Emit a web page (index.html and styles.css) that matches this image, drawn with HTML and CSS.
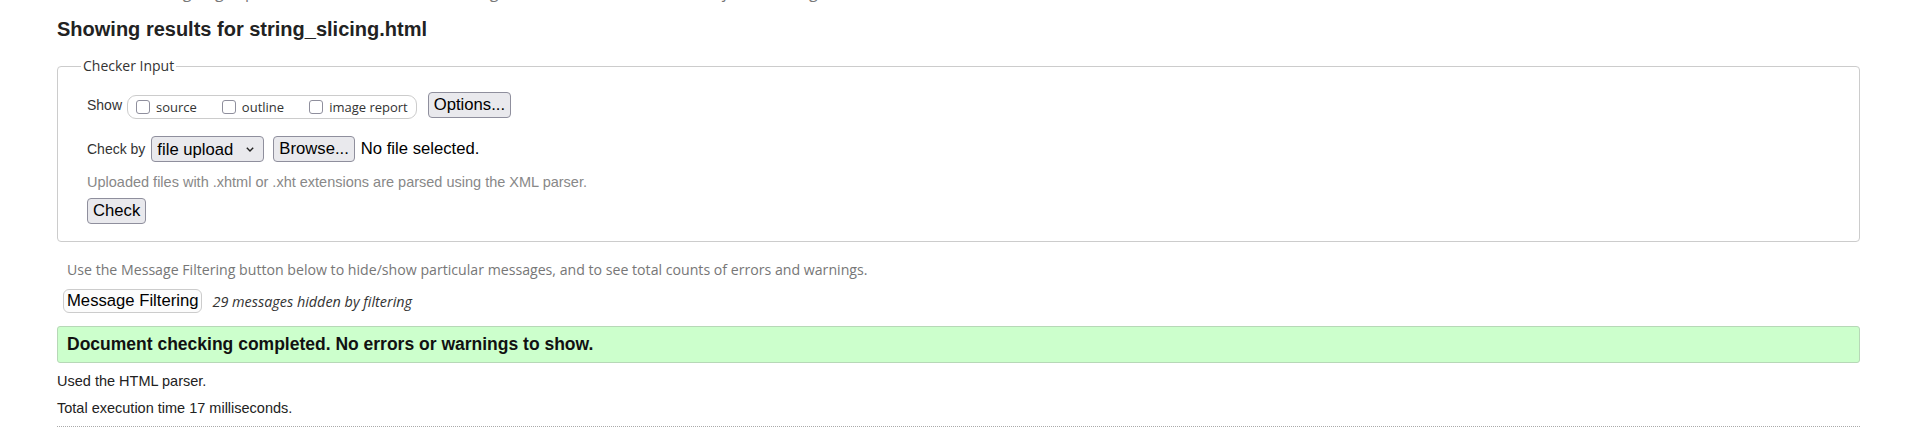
FILE: index.html
```html
<!DOCTYPE html>
<html lang="en">
<head>
<meta charset="utf-8">
<title>Showing results for string_slicing.html</title>
<link rel="stylesheet" href="styles.css">
</head>
<body>
<div class="page">
  <p class="intro">This tool is an ongoing experiment in better HTML checking, and its behavior remains subject to change</p>
  <h2 class="title">Showing results for string_slicing.html</h2>
  <form class="checker">
    <fieldset class="input-box">
      <legend class="legend">Checker Input</legend>
      <div class="fields">
        <div class="row show-row">
          <span class="lbl">Show</span>
          <span class="pill">
            <label class="opt"><input type="checkbox" class="cb"><span>source</span></label>
            <label class="opt"><input type="checkbox" class="cb"><span>outline</span></label>
            <label class="opt"><input type="checkbox" class="cb"><span>image report</span></label>
          </span>
          <button type="button" class="btn opts">Options...</button>
        </div>
        <div class="row by-row">
          <span class="lbl">Check by</span>
          <span class="select-wrap">
            <select class="select"><option>file upload</option></select>
            <svg class="chev" width="8" height="5" viewBox="0 0 8 5"><path d="M0.8 0.8 L4 4 L7.2 0.8" fill="none" stroke="#222" stroke-width="1.4"/></svg>
          </span>
          <button type="button" class="btn browse">Browse...</button>
          <span class="nofile">No file selected.</span>
        </div>
        <p class="hint">Uploaded files with .xhtml or .xht extensions are parsed using the XML parser.</p>
        <button type="button" class="btn check">Check</button>
      </div>
    </fieldset>
  </form>
  <p class="filter-note">Use the Message Filtering button below to hide/show particular messages, and to see total counts of errors and warnings.</p>
  <div class="filter-row">
    <button type="button" class="filter-btn">Message Filtering</button>
    <em class="hidden-count">29 messages hidden by filtering</em>
  </div>
  <div class="success">Document checking completed. No errors or warnings to show.</div>
  <p class="stat">Used the HTML parser.</p>
  <p class="stat">Total execution time 17 milliseconds.</p>
  <hr class="sep">
</div>
</body>
</html>
```

FILE: styles.css
```css
html, body {
  margin: 0;
  padding: 0;
  background: #fff;
}

body {
  font-family: "Liberation Sans", Arial, sans-serif;
  color: #222;
}

.page {
  padding: 0 59px 0 57px;
}

.intro {
  margin: -19px 0 0;
  font-family: "Open Sans", sans-serif;
  font-size: 16px;
  line-height: 22px;
  color: #777;
  white-space: nowrap;
}

.title {
  margin: 15px 0 0;
  font-size: 20px;
  line-height: 23px;
  font-weight: bold;
  color: #222;
}

.checker {
  margin: 0;
}

.input-box {
  margin: 16px 0 0;
  padding: 0 24px 17px 23px;
  border: 1px solid #ccc;
  border-radius: 4px;
  min-width: 0;
}

.legend {
  padding: 0 2px;
  font-family: "Open Sans", sans-serif;
  font-size: 14px;
  line-height: 18px;
  color: #333;
}

.fields {
  padding-left: 6px;
}

.row {
  display: flex;
  align-items: center;
  height: 26px;
}

.show-row {
  margin-top: 17px;
}

.by-row {
  margin-top: 18px;
}

.lbl {
  font-size: 14px;
  color: #333;
}

.show-row .lbl {
  margin-right: 5px;
}

.by-row .lbl {
  margin-right: 6px;
}

.pill {
  display: inline-flex;
  align-items: center;
  box-sizing: border-box;
  height: 24px;
  margin-top: 3px;
  padding: 0 8px;
  border: 1px solid #ccc;
  border-radius: 9px;
  gap: 25px;
}

.opt {
  display: inline-flex;
  align-items: center;
  gap: 6px;
  font-family: "Open Sans", sans-serif;
  font-size: 13px;
  color: #333;
}

.cb {
  appearance: none;
  -webkit-appearance: none;
  box-sizing: border-box;
  width: 14px;
  height: 14px;
  margin: 0;
  border: 1px solid #8f8f9d;
  border-radius: 3px;
  background: #fff;
}

.btn {
  box-sizing: border-box;
  height: 26px;
  margin: 0;
  padding: 0 5px;
  border: 1px solid #8f8f9d;
  border-radius: 4px;
  background: #e9e9ed;
  font-family: "Liberation Sans", Arial, sans-serif;
  font-size: 16.67px;
  line-height: 20px;
  color: #000;
}

.opts {
  margin-left: 11px;
}

.select-wrap {
  position: relative;
  display: inline-block;
  height: 26px;
}

.select {
  appearance: none;
  -webkit-appearance: none;
  box-sizing: border-box;
  width: 113px;
  height: 26px;
  margin: 0;
  padding: 0 0 0 5px;
  border: 1px solid #8f8f9d;
  border-radius: 4px;
  background: #e9e9ed;
  font-family: "Liberation Sans", Arial, sans-serif;
  font-size: 16.67px;
  color: #000;
}

.chev {
  position: absolute;
  right: 10px;
  top: 11px;
  pointer-events: none;
}

.browse {
  margin-left: 9px;
}

.nofile {
  margin-left: 6px;
  font-size: 16.67px;
  color: #000;
}

.hint {
  margin: 12px 0 0;
  font-size: 14.5px;
  line-height: 17px;
  color: #888;
}

.check {
  display: block;
  margin-top: 7px;
}

.filter-note {
  margin: 18px 0 0;
  padding-left: 10px;
  font-family: "Open Sans", sans-serif;
  font-size: 14.15px;
  line-height: 19px;
  color: #777;
}

.filter-row {
  display: flex;
  align-items: center;
  margin-top: 10px;
  padding-left: 6px;
  height: 24px;
}

.filter-btn {
  box-sizing: border-box;
  height: 24px;
  margin: 0;
  padding: 0 3px;
  border: 1px solid #ccc;
  border-radius: 6px;
  background: #fcfcfc;
  font-family: "Liberation Sans", Arial, sans-serif;
  font-size: 16.67px;
  line-height: 20px;
  color: #000;
}

.hidden-count {
  margin-left: 10px;
  font-family: "Open Sans", sans-serif;
  font-style: italic;
  font-size: 14.4px;
  color: #333;
}

.success {
  margin-top: 13px;
  padding: 7px 9px;
  border: 1px solid #b7d8b7;
  border-radius: 3px;
  background: #ccffcc;
  font-size: 17.5px;
  line-height: 21px;
  font-weight: bold;
  color: #111;
}

.stat {
  margin: 10px 0 0;
  font-size: 14.5px;
  line-height: 17px;
  color: #222;
}

.sep {
  height: 0;
  margin: 9px 0 0;
  border: 0;
  border-top: 1px dotted #aaa;
}
```
